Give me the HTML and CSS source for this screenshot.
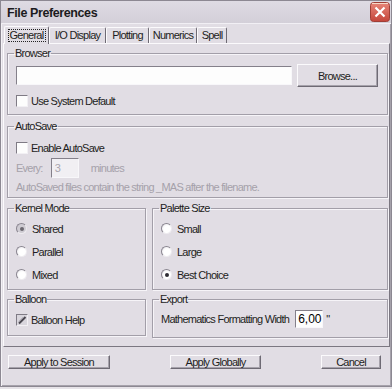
FILE: index.html
```html
<!DOCTYPE html>
<html>
<head>
<meta charset="utf-8">
<link rel="stylesheet" href="styles.css">
</head>
<body>
<div class="window">
  <div class="titlebar">
    <span class="title">File Preferences</span>
    <svg class="close" width="20" height="20" viewBox="0 0 20 20">
      <defs>
        <linearGradient id="cg" x1="0" y1="0" x2="0" y2="1">
          <stop offset="0" stop-color="#e8877a"/>
          <stop offset="1" stop-color="#c4453a"/>
        </linearGradient>
      </defs>
      <rect x="0.5" y="0.5" width="19" height="19" rx="3" fill="url(#cg)" stroke="#a03e36"/>
      <path d="M2 1.5 H18" stroke="#f6d9c8" stroke-width="1"/>
      <path d="M5.5 5.5 L14.5 14.5 M14.5 5.5 L5.5 14.5" stroke="#ffffff" stroke-width="2.2"/>
    </svg>
  </div>

  <div class="tabs">
    <div class="tab active t-general"><span class="focus">General</span></div>
    <div class="tab t-io">I/O Display</div>
    <div class="tab t-plot">Plotting</div>
    <div class="tab t-num">Numerics</div>
    <div class="tab t-spell">Spell</div>
  </div>

  <div class="panel">
    <fieldset class="group g-browser">
      <legend>Browser</legend>
      <div class="browse-row">
        <div class="field path-field"></div>
        <div class="btn browse-btn">Browse...</div>
      </div>
      <div class="check-row mt-browser">
        <span class="checkbox"></span><span>Use System Default</span>
      </div>
    </fieldset>

    <fieldset class="group g-autosave">
      <legend>AutoSave</legend>
      <div class="check-row mt-enable">
        <span class="checkbox"></span><span>Enable AutoSave</span>
      </div>
      <div class="every-row disabled">
        <span>Every:</span>
        <div class="field every-field">3</div>
        <span class="minutes">minutes</span>
      </div>
      <div class="note disabled">AutoSaved files contain the string _MAS after the filename.</div>
    </fieldset>

    <div class="row row-mid">
      <fieldset class="group g-left">
        <legend>Kernel Mode</legend>
        <div class="radio-list">
          <div class="radio-row"><span class="radio checked shared"></span><span>Shared</span></div>
          <div class="radio-row"><span class="radio"></span><span>Parallel</span></div>
          <div class="radio-row"><span class="radio"></span><span>Mixed</span></div>
        </div>
      </fieldset>
      <fieldset class="group g-right">
        <legend>Palette Size</legend>
        <div class="radio-list">
          <div class="radio-row"><span class="radio"></span><span>Small</span></div>
          <div class="radio-row"><span class="radio"></span><span>Large</span></div>
          <div class="radio-row"><span class="radio checked"></span><span>Best Choice</span></div>
        </div>
      </fieldset>
    </div>

    <div class="row row-bottom">
      <fieldset class="group g-left g-balloon">
        <legend>Balloon</legend>
        <div class="check-row mt-balloon">
          <span class="checkbox checked">
            <svg width="10" height="10" viewBox="0 0 10 10"><path d="M2 8.5 L8.5 2" stroke="#4a4750" stroke-width="2"/><path d="M2 6.5 L6.5 2" stroke="#9c98a2" stroke-width="1"/></svg>
          </span><span>Balloon Help</span>
        </div>
      </fieldset>
      <fieldset class="group g-right g-export">
        <legend>Export</legend>
        <div class="export-row">
          <span>Mathematics Formatting Width</span>
          <div class="field width-field">6,00</div>
          <span>"</span>
        </div>
      </fieldset>
    </div>
  </div>

  <div class="buttons">
    <div class="btn b-session">Apply to Session</div>
    <div class="btn b-global">Apply Globally</div>
    <div class="btn b-cancel">Cancel</div>
  </div>
</div>
</body>
</html>
```

FILE: styles.css
```css
* { box-sizing: border-box; }
html, body { margin: 0; padding: 0; }
body {
  width: 392px;
  height: 389px;
  overflow: hidden;
  background: #e6e3e8;
  font-family: "Liberation Sans", Arial, sans-serif;
  font-size: 11px;
  letter-spacing: -0.75px;
  color: #1e1d22;
}
.window {
  width: 392px;
  height: 387px;
  display: flex;
  flex-direction: column;
  background: #e1dde4;
  border: 1px solid #8c8892;
  box-shadow: inset 1px 1px 0 #f4f2f6, inset -1px -1px 0 #a6a2ab;
}
.titlebar {
  height: 23px;
  flex: none;
  display: flex;
  align-items: center;
  justify-content: space-between;
  padding: 0 1px 0 6px;
  background: linear-gradient(#dedbe3, #d3cfd8);
  border-bottom: 1px solid #f1eff4;
}
.title {
  font-weight: bold;
  font-size: 12.5px;
  letter-spacing: -0.4px;
  color: #1c1b20;
  padding-top: 2px;
}
.close { display: block; }

.tabs {
  height: 19px;
  flex: none;
  display: flex;
  align-items: flex-end;
  padding-left: 3px;
}
.tab {
  height: 16px;
  border-top: 1px solid #fbfafc;
  border-left: 1px solid #fbfafc;
  border-right: 1px solid #6e6a74;
  border-radius: 2px 2px 0 0;
  line-height: 14px;
  text-align: center;
  white-space: nowrap;
}
.tab.active {
  height: 18px;
  position: relative;
  top: 1px;
  background: #e1dde4;
  z-index: 1;
  padding-top: 1px;
}
.focus {
  display: inline-block;
  border: 1px dotted #222;
  line-height: 11px;
  width: 38px;
}
.t-general { width: 45px; }
.t-io { width: 57px; }
.t-plot { width: 43px; }
.t-num { width: 48px; }
.t-spell { width: 30px; }

.panel {
  height: 304px;
  flex: none;
  margin: 0 1px 0 2px;
  border: 1px solid;
  border-color: #fbfafc #7b7781 #7b7781 #fbfafc;
  padding: 3px 1px 0 3px;
  display: flex;
  flex-direction: column;
}
.group {
  margin: 0;
  padding: 0 8px;
  min-width: 0;
  border: 1px solid #a29ea8;
  box-shadow: 1px 1px 0 #f6f4f8, inset 1px 1px 0 #f6f4f8;
  display: flex;
  flex-direction: column;
}
legend {
  padding: 0 1px;
  margin-left: -2px;
  line-height: 12px;
}
.g-browser { height: 68px; }
.g-autosave { height: 78px; margin-top: 5px; }
.row { display: flex; gap: 6px; }
.row-mid { margin-top: 4px; }
.row-mid .group { height: 88px; }
.row-bottom { margin-top: 3px; align-items: flex-start; }
.g-left { width: 139px; flex: none; }
.g-right { flex: 1; }
.g-balloon { height: 43px; }
.g-export { height: 45px; }

.browse-row {
  display: flex;
  align-items: center;
  justify-content: space-between;
  margin-top: 5px;
  padding-right: 1px;
}
.field {
  background: #fdfdfd;
  border: 1px solid;
  border-color: #84808a #f8f7fa #f8f7fa #84808a;
}
.path-field { width: 276px; height: 19px; }
.btn {
  display: flex;
  align-items: center;
  justify-content: center;
  background: #e1dde4;
  border: 1px solid;
  border-color: #fbfafc #6e6a74 #6e6a74 #fbfafc;
  box-shadow: inset -1px -1px 0 #a6a2ab;
  white-space: nowrap;
}
.browse-btn { width: 81px; height: 23px; }

.check-row { display: flex; align-items: center; gap: 3px; height: 12px; }
.mt-browser { margin-top: 8px; }
.mt-enable { margin-top: 10px; }
.mt-balloon { margin-top: 9px; }
.checkbox {
  width: 12px;
  height: 12px;
  flex: none;
  background: #fdfdfd;
  border: 1px solid;
  border-color: #7f7b85 #f2f0f4 #f2f0f4 #7f7b85;
  display: flex;
  align-items: center;
  justify-content: center;
}
.checkbox.checked { background: #d9d6dd; }
.checkbox svg { display: block; }

.every-row { display: flex; align-items: center; margin-top: 4px; height: 20px; }
.every-field {
  width: 28px;
  height: 20px;
  margin-left: 8px;
  padding-left: 3px;
  line-height: 18px;
  background: #f1eff3;
  color: #a9a5ae;
}
.minutes { margin-left: 12px; }
.disabled { color: #a5a1aa; }
.note { margin-top: 3px; line-height: 12px; white-space: nowrap; }

.radio-list { display: flex; flex-direction: column; gap: 10px; margin-top: 8px; }
.radio-row { display: flex; align-items: center; gap: 5px; height: 13px; }
.radio {
  width: 11px;
  height: 11px;
  flex: none;
  border-radius: 50%;
  border: 1px solid;
  border-color: #8a8690 #eeecf0 #eeecf0 #8a8690;
  background: radial-gradient(circle at 60% 60%, #ffffff 45%, #e4e1e7 100%);
  display: flex;
  align-items: center;
  justify-content: center;
}
.radio.checked::after {
  content: "";
  width: 4px;
  height: 4px;
  border-radius: 50%;
  background: #2e2c33;
}
.radio.shared { background: #cfccd3; }
.radio.shared::after { background: #6b6870; }

.export-row { display: flex; align-items: center; margin-top: 5px; height: 18px; }
.width-field {
  width: 28px;
  height: 18px;
  margin-left: 6px;
  margin-right: 3px;
  padding-left: 2px;
  line-height: 16px;
  font-size: 12px;
  letter-spacing: 0;
  color: #000;
}

.buttons {
  flex: none;
  display: flex;
  justify-content: space-between;
  padding: 0 10px 0 7px;
  margin-top: 8px;
}
.buttons .btn { height: 14px; }
.b-session { width: 102px; }
.b-global { width: 91px; }
.b-cancel { width: 60px; }
```
